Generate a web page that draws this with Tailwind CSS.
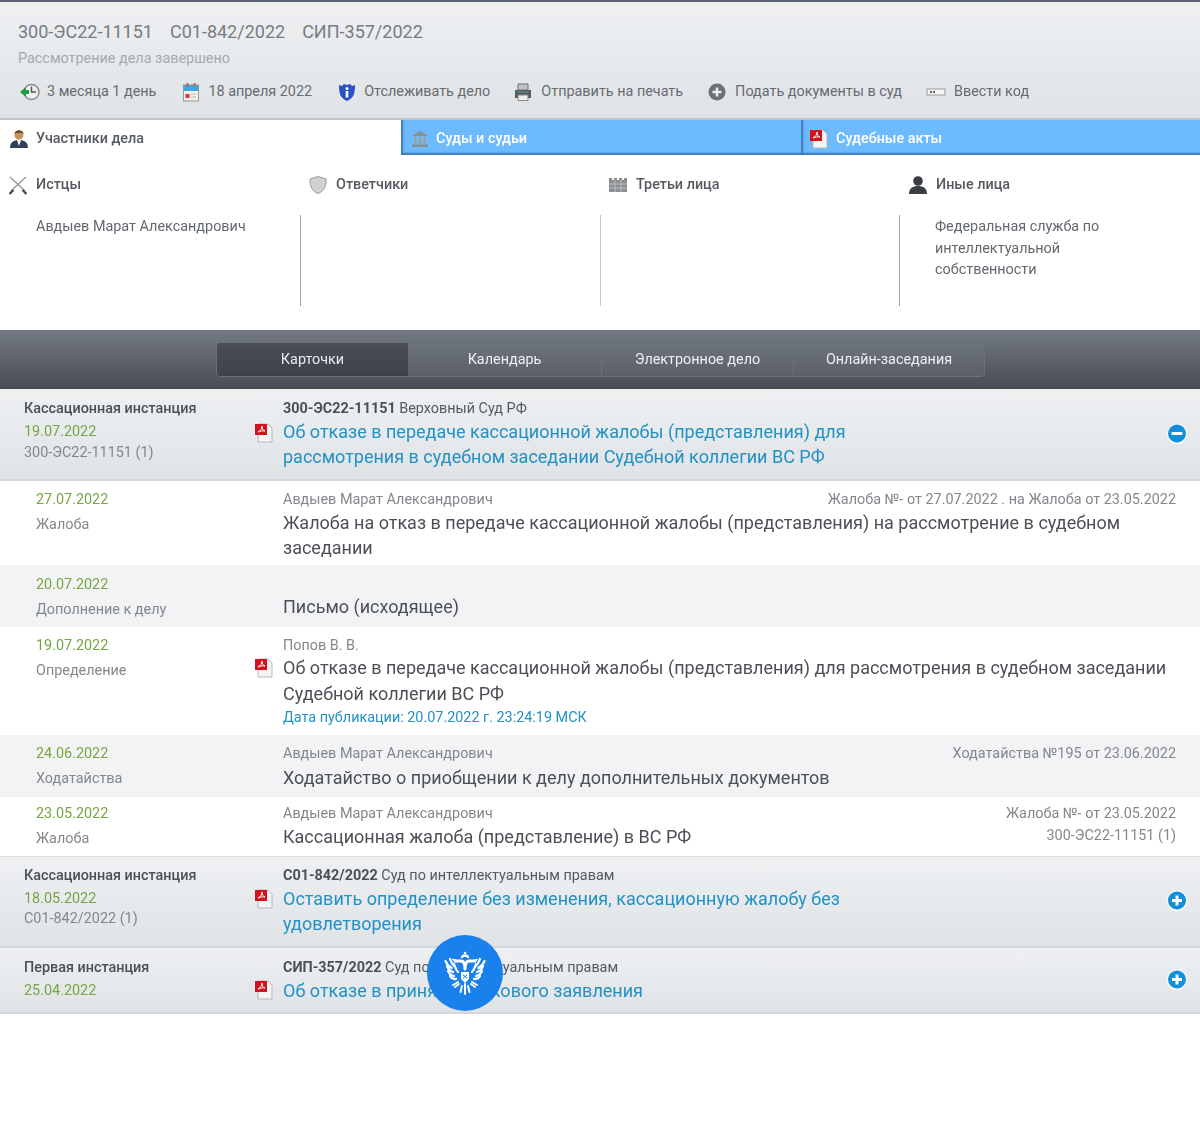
<!DOCTYPE html>
<html lang="ru"><head><meta charset="utf-8">
<script src="https://cdn.jsdelivr.net/npm/@tailwindcss/browser@4"></script>
</head>
<body class="bg-white font-['Roboto',sans-serif] text-[#555a60]">
<div class="w-[1200px] h-[1127px] overflow-hidden relative [filter:blur(0.7px)]">
<svg class="hidden"><defs>
<symbol id="pdf" viewBox="0 0 18 20"><path d="M3 1h10l4 4v14H3z" fill="#f4f4f4" stroke="#b5b8bb"/><path d="M0 1h12v11H0z" fill="#d3121d"/><path d="M3 9c2-1 4-3 4-6 0 3 1 4 3 5-2-.4-5 0-7 1z" fill="none" stroke="#fff" stroke-width="1"/></symbol>
<symbol id="plus" viewBox="0 0 22 22"><circle cx="11" cy="11" r="10.5" fill="#fff" opacity=".6"/><circle cx="11" cy="10.5" r="9" fill="#108fdc"/><path d="M11 5.5v10M6 10.5h10" stroke="#fff" stroke-width="3"/></symbol>
</defs></svg>

<header class="h-[120px] border-t-2 border-t-[#5c6474] border-b-2 border-b-[#c2c5c8] bg-gradient-to-b from-[#eef0f2] to-[#e0e3e6] pl-[18px] pt-[18px]">
  <div class="flex gap-[17px] text-lg leading-6 text-[#777c82]"><span>300-ЭС22-11151</span><span>С01-842/2022</span><span>СИП-357/2022</span></div>
  <div class="text-[14.4px] leading-5 text-[#a5a9ae] mt-[5px]">Рассмотрение дела завершено</div>
  <div class="flex items-center h-6 mt-[11px] text-[14.4px] text-[#666b71]">
    <svg class="w-5 h-5 ml-[2px] mr-[7px]" viewBox="0 0 20 20"><circle cx="11.5" cy="10" r="7.5" fill="#f0f0ee" stroke="#8a8d8f" stroke-width="1.5"/><path d="M11.5 4.5V10h4.5" fill="none" stroke="#555" stroke-width="1.5"/><path d="M0 10l6-5v3h3v4H6v3z" fill="#1f9a3a"/></svg>
    <span>3 месяца 1 день</span>
    <svg class="w-5 h-5 ml-[25px] mr-[7px]" viewBox="0 0 20 20"><rect x="2.5" y="3" width="15" height="16" fill="#f3efe8" stroke="#999"/><rect x="2.5" y="3" width="15" height="6" fill="#3ea7e6"/><rect x="5.5" y="1" width="2" height="4" fill="#d05a3c"/><rect x="12.5" y="1" width="2" height="4" fill="#d05a3c"/><rect x="4.500" y="12" width="4" height="4" fill="#d9363e"/><path d="M10 12h5M10 15h5" stroke="#bbb"/></svg>
    <span>18 апреля 2022</span>
    <svg class="w-5 h-5 ml-[25px] mr-[7px]" viewBox="0 0 20 20"><path d="M2 3l3 1 2-2 3 1 3-1 2 2 3-1c0 8-1 13-8 16C3 16 2 11 2 3z" fill="#2a52c4"/><circle cx="10" cy="6.500" r="1.500" fill="#fff"/><rect x="8.700" y="9" width="2.600" height="6.500" fill="#fff"/></svg>
    <span>Отслеживать дело</span>
    <svg class="w-5 h-5 ml-[23px] mr-[8px]" viewBox="0 0 20 20"><path d="M5 2h10v6H5z" fill="#bfc4c6" stroke="#6b7072"/><path d="M2 8h16v8H2z" fill="#565b60"/><path d="M5 13h10v5.500H5z" fill="#f0f0f0" stroke="#888"/><path d="M4 10h12" stroke="#8fa" stroke-width=".8" opacity=".5"/></svg>
    <span>Отправить на печать</span>
    <svg class="w-5 h-5 ml-[24px] mr-[8px]" viewBox="0 0 20 20"><circle cx="10" cy="10" r="8.500" fill="#6d7176"/><path d="M10 5.500v9M5.500 10h9" stroke="#eee" stroke-width="2.400"/></svg>
    <span>Подать документы в суд</span>
    <svg class="w-5 h-5 ml-[24px] mr-[8px]" viewBox="0 0 20 20"><rect x="1" y="7" width="18" height="6" fill="#f4f4f4" stroke="#999"/><path d="M4 9h2v2H4zM7 9h2v2H7z" fill="#666"/></svg>
    <span>Ввести код</span>
  </div>
</header>

<nav class="flex h-[35px] text-[14.4px] font-medium">
  <div class="w-[401px] bg-white flex items-center pl-[9px] pt-[2px] text-[#555a60]">
    <svg class="w-5 h-5 mr-[7px]" viewBox="0 0 20 20"><circle cx="10" cy="6" r="4.500" fill="#c98f5e"/><path d="M5.500 5c0-5 9-5 9 0l-1.500-1H7z" fill="#6f4a28"/><path d="M1 19c0-6 4-8 9-8s9 2 9 8z" fill="#2f3f5c"/><path d="M8 11h4l-2 6z" fill="#fff"/></svg>
    <span>Участники дела</span>
  </div>
  <div class="w-[400px] bg-[#6ebaff] shadow-[inset_2px_-2px_2px_rgba(40,90,150,0.7)] flex items-center pl-[9px] pt-[2px] text-white">
    <svg class="w-5 h-5 mr-[6px]" viewBox="0 0 20 20"><path d="M10 2l8 5H2z" fill="#8a8f8e"/><path d="M4 8h2.500v7H4zM8.800 8h2.400v7H8.800zM13.500 8H16v7h-2.500z" fill="#9a9f9d"/><path d="M2 15.500h16V18H2z" fill="#8a8f8e"/></svg>
    <span>Суды и судьи</span>
  </div>
  <div class="flex-1 bg-[#6ebaff] shadow-[inset_2px_-2px_2px_rgba(40,90,150,0.7)] flex items-center pl-[8px] pt-[2px] text-white">
    <svg class="w-[20px] h-[20px] mr-[7px]" viewBox="0 0 18 20"><use href="#pdf"/></svg>
    <span>Судебные акты</span>
  </div>
</nav>

<section class="h-[175px] grid grid-cols-4 text-[#63686e]">
  <div class="relative">
    <div class="flex items-center h-5 mt-[20px] pl-[8px] text-[14.4px] font-medium text-[#555a60]">
      <svg class="w-5 h-5 mr-[8px]" viewBox="0 0 20 20"><path d="M2 2l15 14M18 2L3 16" stroke="#999" stroke-width="1.400"/><path d="M1.500 19l4-4M18.500 19l-4-4" stroke="#444" stroke-width="2.200"/></svg><span>Истцы</span></div>
    <div class="mt-[21px] pl-[36px] pr-[30px] text-[14.4px] leading-[21.5px]">Авдыев Марат Александрович</div>
  </div>
  <div class="relative">
    <div class="flex items-center h-5 mt-[20px] pl-[8px] text-[14.4px] font-medium text-[#555a60]">
      <svg class="w-5 h-5 mr-[8px]" viewBox="0 0 20 20"><path d="M10 1.500l8 2.500c0 8-2 12-8 14.500C4 16 2 12 2 4z" fill="#cfd1d3" stroke="#999"/></svg><span>Ответчики</span></div>
    <div class="absolute left-0 top-[60px] h-[91px] w-px bg-[#9aa0ae]"></div>
  </div>
  <div class="relative">
    <div class="flex items-center h-5 mt-[20px] pl-[8px] text-[14.4px] font-medium text-[#555a60]">
      <svg class="w-5 h-5 mr-[8px]" viewBox="0 0 20 20"><path d="M1 3h3v2h2V3h3v2h2V3h3v2h2V3h3v14H1z" fill="#8c8f92"/><path d="M1 9h18M1 13h18M7 5v12M13 5v12" stroke="#c8c8c8" stroke-width=".8"/></svg><span>Третьи лица</span></div>
    <div class="absolute left-0 top-[60px] h-[91px] w-px bg-[#c5c8cc]"></div>
  </div>
  <div class="relative">
    <div class="flex items-center h-5 mt-[20px] pl-[8px] text-[14.4px] font-medium text-[#555a60]">
      <svg class="w-5 h-5 mr-[8px]" viewBox="0 0 20 20"><circle cx="10" cy="6" r="4.800" fill="#3b3f44"/><path d="M1 19c0-6 4-8 9-8s9 2 9 8z" fill="#3b3f44"/></svg><span>Иные лица</span></div>
    <div class="absolute -left-px top-[60px] h-[91px] w-px bg-[#9aa0ae]"></div>
    <div class="mt-[21px] pl-[35px] pr-[70px] text-[14.4px] leading-[21.5px]">Федеральная служба по интеллектуальной собственности</div>
  </div>
</section>

<div class="h-[59px] bg-gradient-to-b from-[#747a84] to-[#484d56] border-b border-b-[#3f444c] pt-[12px] pl-[216px]">
  <div class="flex w-[769px] h-[35px] rounded-[4px] bg-gradient-to-b from-[#6e747e] to-[#5a5f69] border border-[#6a707a] text-[14.4px] text-[#eef0f2] overflow-hidden">
    <div class="w-[191px] flex items-center justify-center bg-gradient-to-b from-[#4a4e57] to-[#3d4149] text-[#e8eaec]">Карточки</div>
    <div class="w-[194px] flex items-center justify-center border-r border-r-[#6a707a]">Календарь</div>
    <div class="w-[192px] flex items-center justify-center border-r border-r-[#6a707a]">Электронное дело</div>
    <div class="flex-1 flex items-center justify-center">Онлайн-заседания</div>
  </div>
</div>

<main>
  <article class="h-[92px] flex bg-gradient-to-b from-[#eef0f2] to-[#e0e3e6] border-b-2 border-b-[#d5d7da]">
    <div class="w-[255px] pl-[24px] pt-[10px]">
      <div class="text-[14.4px] leading-5 font-medium text-[#4c5056]">Кассационная инстанция</div>
      <div class="text-[14.4px] leading-[23px] text-[#77a544] mt-[1px]">19.07.2022</div>
      <div class="text-[14.4px] leading-5 text-[#83878c]">300-ЭС22-11151 (1)</div>
    </div>
    <div class="w-[28px] pt-[34px]"><svg class="w-[18px] h-5" viewBox="0 0 18 20"><use href="#pdf"/></svg></div>
    <div class="flex-1 pt-[10px]">
      <div class="text-[14.4px] leading-5"><b class="font-bold text-[#4c5056]">300-ЭС22-11151</b> Верховный Суд РФ</div>
      <div class="text-lg leading-[25px] text-[#2291c4] w-[600px]">Об отказе в передаче кассационной жалобы (представления) для рассмотрения в судебном заседании Судебной коллегии ВС РФ</div>
    </div>
    <div class="w-[46px] pt-[34px] pl-[12px]"><svg class="w-[22px] h-[22px]" viewBox="0 0 22 22"><circle cx="11" cy="11" r="10.500" fill="#fff" opacity=".6"/><circle cx="11" cy="10.500" r="9" fill="#108fdc"/><rect x="5.500" y="9" width="11" height="3" rx="1" fill="#fff"/></svg></div>
  </article>

  <div class="h-[84px] flex bg-white">
    <div class="w-[283px] pl-[36px] pt-[9px]">
      <div class="text-[14.4px] leading-5 text-[#77a544]">27.07.2022</div>
      <div class="text-[14.4px] leading-5 text-[#83878c] mt-[5px]">Жалоба</div>
    </div>
    <div class="flex-1 pr-[24px] pt-[9px]">
      <div class="flex justify-between text-[14.4px] leading-5 text-[#83878c]"><span>Авдыев Марат Александрович</span><span>Жалоба №- от 27.07.2022 . на Жалоба от 23.05.2022</span></div>
      <div class="text-lg leading-[25px] text-[#4c5056]">Жалоба на отказ в передаче кассационной жалобы (представления) на рассмотрение в судебном заседании</div>
    </div>
  </div>

  <div class="h-[62px] flex bg-[#f2f3f4]">
    <div class="w-[283px] pl-[36px] pt-[10px]">
      <div class="text-[14.4px] leading-5 text-[#77a544]">20.07.2022</div>
      <div class="text-[14.4px] leading-5 text-[#83878c] mt-[5px]">Дополнение к делу</div>
    </div>
    <div class="flex-1 pt-[29px] text-lg leading-[25px] text-[#4c5056]">Письмо (исходящее)</div>
  </div>

  <div class="h-[108px] flex bg-white">
    <div class="w-[255px] pl-[36px] pt-[9px]">
      <div class="text-[14.4px] leading-5 text-[#77a544]">19.07.2022</div>
      <div class="text-[14.4px] leading-5 text-[#83878c] mt-[5px]">Определение</div>
    </div>
    <div class="w-[28px] pt-[31px]"><svg class="w-[18px] h-5" viewBox="0 0 18 20"><use href="#pdf"/></svg></div>
    <div class="flex-1 pr-[24px] pt-[9px]">
      <div class="text-[14.4px] leading-5 text-[#83878c]">Попов В. В.</div>
      <div class="text-lg leading-[26px] text-[#4c5056] -mt-[1px]">Об отказе в передаче кассационной жалобы (представления) для рассмотрения в судебном заседании Судебной коллегии ВС РФ</div>
      <div class="text-[14.4px] leading-5 text-[#2291c4] mt-[1px]">Дата публикации: 20.07.2022 г. 23:24:19 МСК</div>
    </div>
  </div>

  <div class="h-[62px] flex bg-[#f2f3f4]">
    <div class="w-[283px] pl-[36px] pt-[9px]">
      <div class="text-[14.4px] leading-5 text-[#77a544]">24.06.2022</div>
      <div class="text-[14.4px] leading-5 text-[#83878c] mt-[5px]">Ходатайства</div>
    </div>
    <div class="flex-1 pr-[24px] pt-[9px]">
      <div class="flex justify-between text-[14.4px] leading-5 text-[#83878c]"><span>Авдыев Марат Александрович</span><span>Ходатайства №195 от 23.06.2022</span></div>
      <div class="text-lg leading-[25px] text-[#4c5056] mt-[1px]">Ходатайство о приобщении к делу дополнительных документов</div>
    </div>
  </div>

  <div class="h-[59px] flex bg-white">
    <div class="w-[283px] pl-[36px] pt-[7px]">
      <div class="text-[14.4px] leading-5 text-[#77a544]">23.05.2022</div>
      <div class="text-[14.4px] leading-5 text-[#83878c] mt-[5px]">Жалоба</div>
    </div>
    <div class="flex-1 pr-[24px] pt-[7px] flex justify-between">
      <div>
        <div class="text-[14.4px] leading-5 text-[#83878c]">Авдыев Марат Александрович</div>
        <div class="text-lg leading-[25px] text-[#4c5056]">Кассационная жалоба (представление) в ВС РФ</div>
      </div>
      <div class="text-right text-[14.4px] leading-[22px] text-[#83878c] -mt-[1px]">Жалоба №- от 23.05.2022<br>300-ЭС22-11151 (1)</div>
    </div>
  </div>

  <article class="h-[92px] flex bg-gradient-to-b from-[#eef0f2] to-[#e0e3e6] border-t border-t-[#dcdee0] border-b-2 border-b-[#d5d7da]">
    <div class="w-[255px] pl-[24px] pt-[9px]">
      <div class="text-[14.4px] leading-5 font-medium text-[#4c5056]">Кассационная инстанция</div>
      <div class="text-[14.4px] leading-[23px] text-[#77a544] mt-[1px]">18.05.2022</div>
      <div class="text-[14.4px] leading-5 text-[#83878c] -mt-[1px]">С01-842/2022 (1)</div>
    </div>
    <div class="w-[28px] pt-[32px]"><svg class="w-[18px] h-5" viewBox="0 0 18 20"><use href="#pdf"/></svg></div>
    <div class="flex-1 pt-[9px]">
      <div class="text-[14.4px] leading-5"><b class="font-bold text-[#4c5056]">С01-842/2022</b> Суд по интеллектуальным правам</div>
      <div class="text-lg leading-[25px] text-[#2291c4] w-[600px]">Оставить определение без изменения, кассационную жалобу без удовлетворения</div>
    </div>
    <div class="w-[46px] pt-[33px] pl-[12px]"><svg class="w-[22px] h-[22px]" viewBox="0 0 22 22"><use href="#plus"/></svg></div>
  </article>

  <article class="h-[66px] flex bg-gradient-to-b from-[#eef0f2] to-[#e0e3e6] border-b-2 border-b-[#d5d7da]">
    <div class="w-[255px] pl-[24px] pt-[10px]">
      <div class="text-[14.4px] leading-5 font-medium text-[#4c5056]">Первая инстанция</div>
      <div class="text-[14.4px] leading-[23px] text-[#77a544] mt-[1px]">25.04.2022</div>
    </div>
    <div class="w-[28px] pt-[32px]"><svg class="w-[18px] h-5" viewBox="0 0 18 20"><use href="#pdf"/></svg></div>
    <div class="flex-1 pt-[10px]">
      <div class="text-[14.4px] leading-5"><b class="font-bold text-[#4c5056]">СИП-357/2022</b> Суд по интеллектуальным правам</div>
      <div class="text-lg leading-[25px] text-[#2291c4] w-[600px]">Об отказе в принятии искового заявления</div>
    </div>
    <div class="w-[46px] pt-[21px] pl-[12px]"><svg class="w-[22px] h-[22px]" viewBox="0 0 22 22"><use href="#plus"/></svg></div>
  </article>
</main>

<div class="absolute left-[427px] top-[935px] w-[76px] h-[76px] rounded-full bg-[#1a80ec] flex items-center justify-center">
  <svg class="w-[42px] h-[45px]" viewBox="0 0 42 45" fill="none" stroke="#fff" stroke-linecap="round">
    <circle cx="21" cy="2" r="1.300" fill="#fff" stroke="none"/>
    <path d="M18 6c1-2 5-2 6 0" stroke-width="2.400"/>
    <path d="M11 10h6c3 0 4 3 4 8M31 10h-6c-3 0-4 3-4 8" stroke-width="3"/>
    <path d="M9 8.500l3 1M33 8.500l-3 1" stroke-width="1.600"/>
    <path d="M1.500 10c1 3 3 5 6 7M3 15c1 3 3 5 6 6M4 20c1 3 3 4 6 5M6 25c1 2 3 3 6 3M6 8c1 3 3 6 5 8M10 13c1 3 2 6 4 8" stroke-width="2.300"/>
    <path d="M40.500 10c-1 3-3 5-6 7M39 15c-1 3-3 5-6 6M38 20c-1 3-3 4-6 5M36 25c-1 2-3 3-6 3M36 8c-1 3-3 6-5 8M32 13c-1 3-2 6-4 8" stroke-width="2.300"/>
    <path d="M17 21h8v7l-4 4-4-4z" fill="#fff" stroke="none"/>
    <path d="M19 24l4 3M23 24l-4 3" stroke="#1a80ec" stroke-width="1"/>
    <path d="M14 31l-5 3M11 36l4-3M28 31l5 3M31 36l-4-3" stroke-width="2"/>
    <path d="M21 33v10M18 35l-1.500 6M24 35l1.500 6" stroke-width="2"/>
  </svg>
</div>
</div>
</body></html>
